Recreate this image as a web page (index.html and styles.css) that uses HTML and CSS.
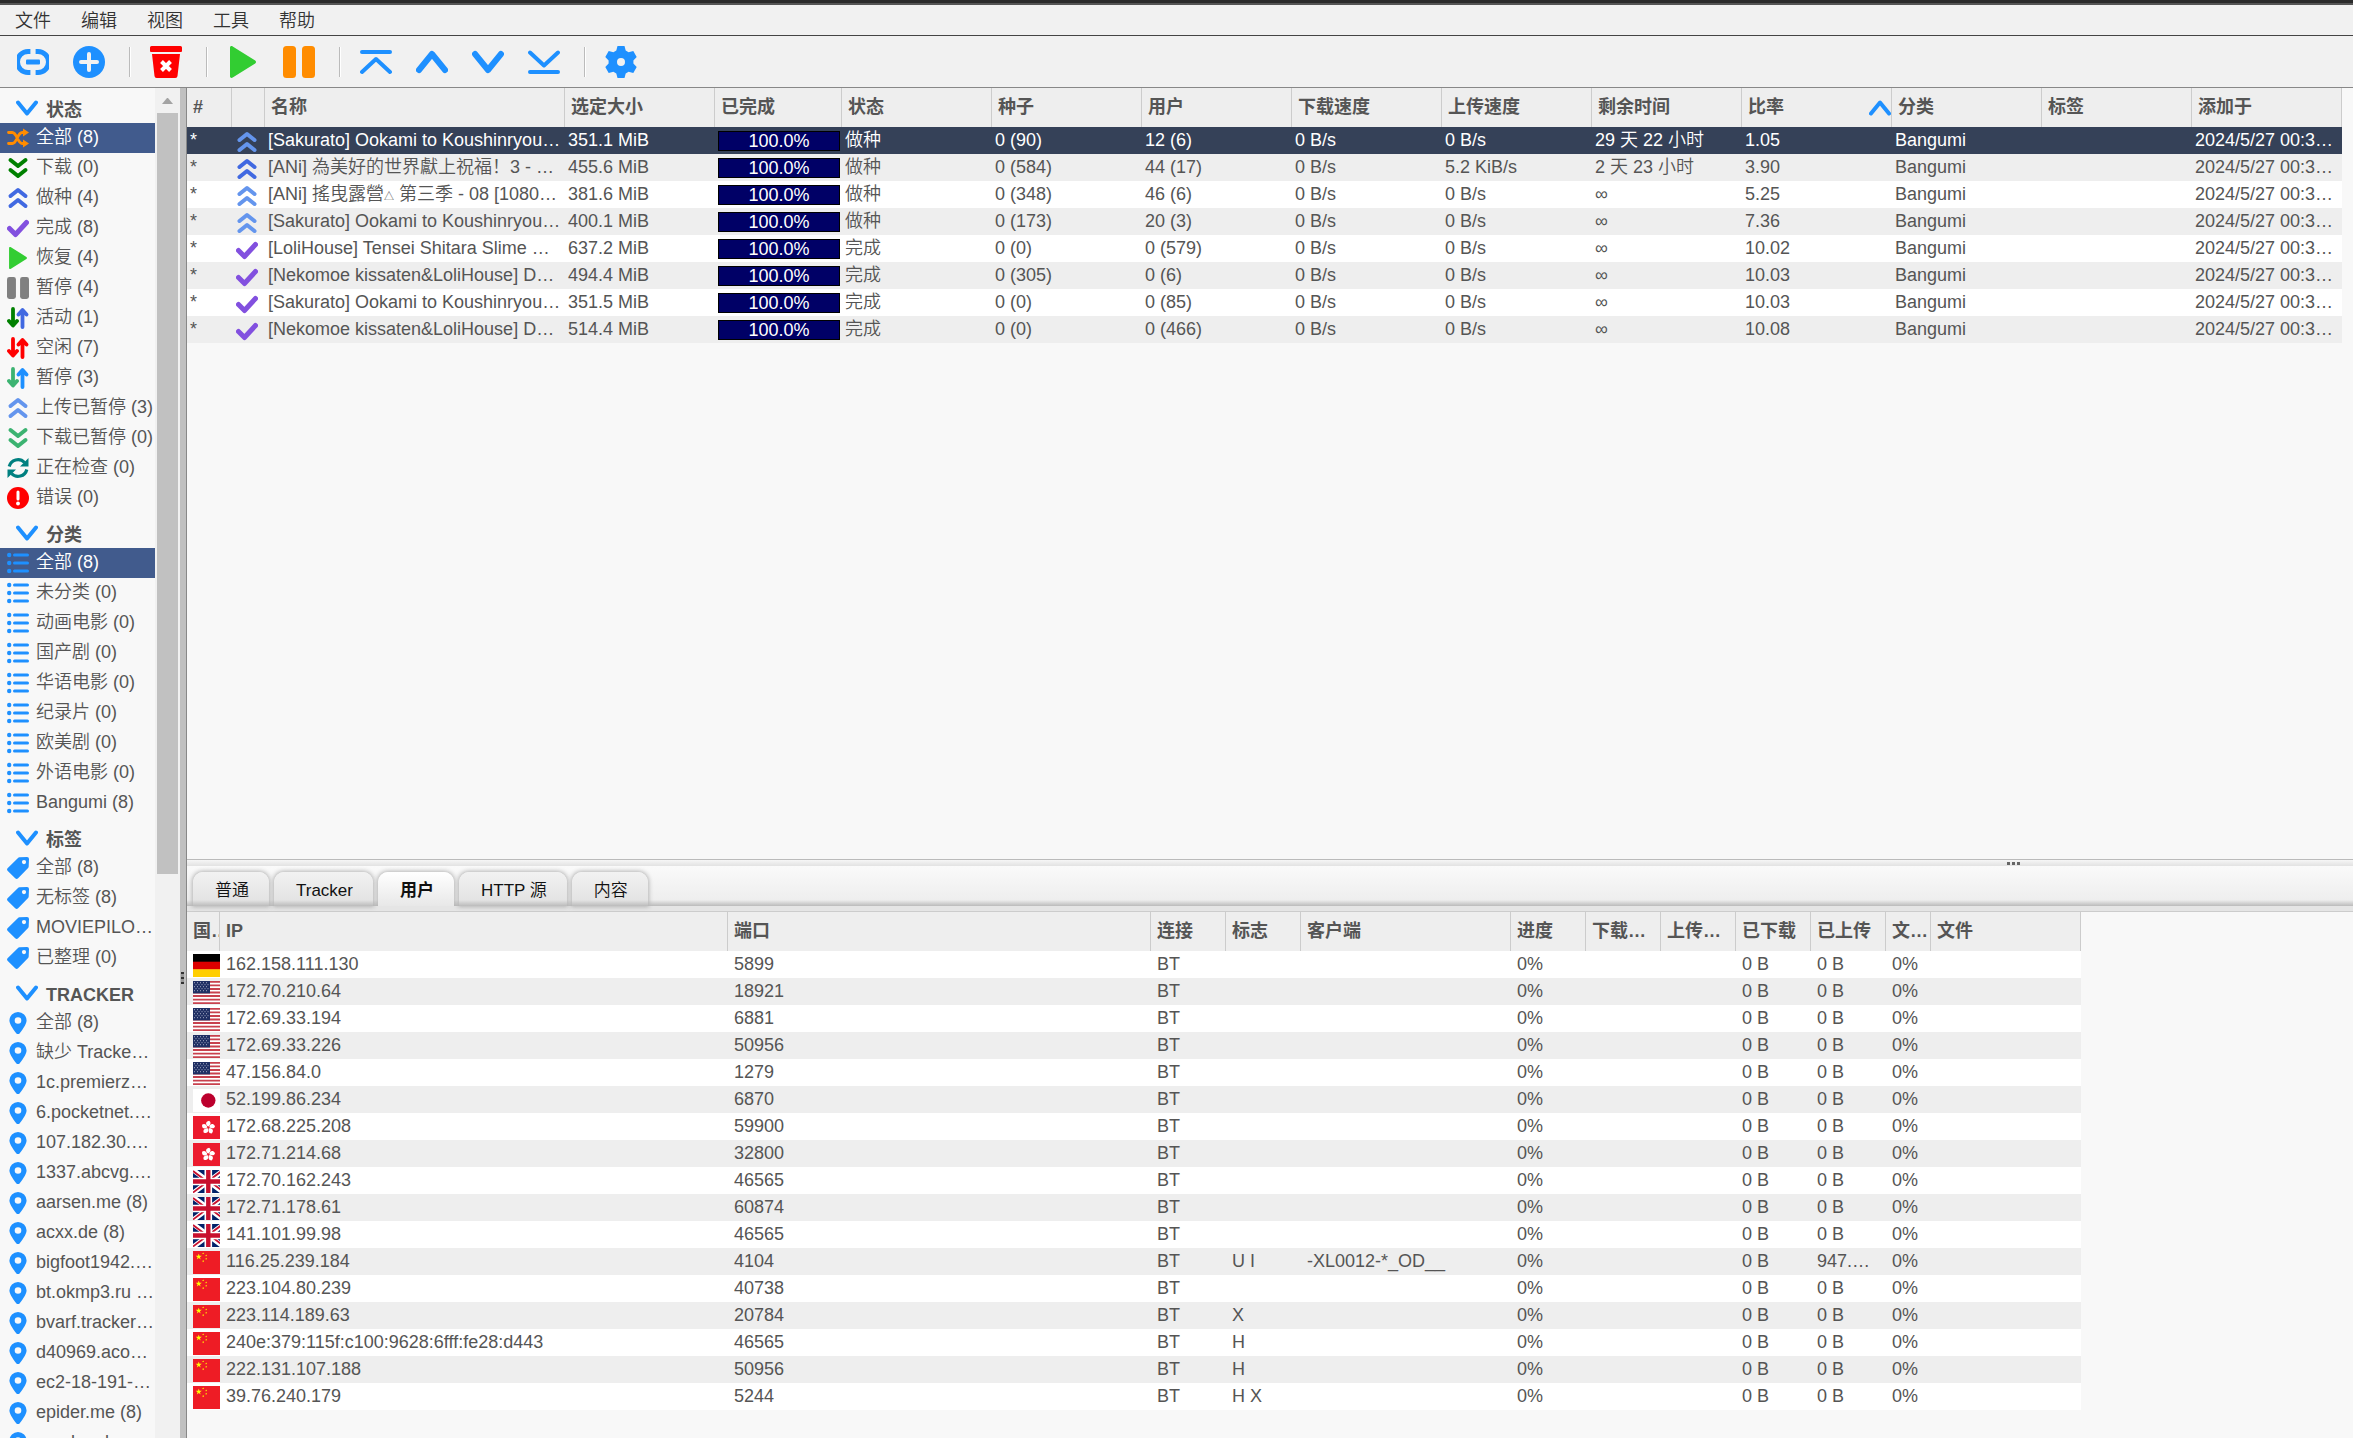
FILE: index.html
```html
<!DOCTYPE html>
<html lang="zh-CN">
<head>
<meta charset="utf-8">
<title>qBittorrent</title>
<meta name="viewport" content="width=device-width, initial-scale=1">
<link rel="stylesheet" href="styles.css">
</head>
<body>
<svg class="sprite" aria-hidden="true">
  <symbol id="link" viewBox="0 0 32 32"><path d="M13.400 5.500H11a10.500 10.500 0 0 0 0 21h2.400M18.600 5.500H21a10.500 10.500 0 0 1 0 21h-2.400" fill="none" stroke="currentColor" stroke-width="5"/><rect x="9" y="13.500" width="14" height="5" rx="1"/></symbol>
  <symbol id="add" viewBox="0 0 32 32"><circle cx="16" cy="16" r="16"/><path d="M16 8v16M8 16h16" stroke="#f1f1f1" stroke-width="4" stroke-linecap="round"/></symbol>
  <symbol id="trash" viewBox="0 0 32 32"><path d="M1.500 0h29a1.500 1.500 0 0 1 1.500 1.500V5a1 1 0 0 1-1 1H1a1 1 0 0 1-1-1V1.500A1.500 1.500 0 0 1 1.500 0zM2 8h28l-2.500 22a2.200 2.200 0 0 1-2.200 2H6.700a2.200 2.200 0 0 1-2.200-2z"/><path d="M11.500 15.500l9 9M20.500 15.500l-9 9" stroke="#fff" stroke-width="4"/></symbol>
  <symbol id="play" viewBox="0 0 32 32"><path d="M3 1.500C3 .2 4.500-.4 5.700.400l22.500 14c1.100.800 1.100 2.400 0 3.200l-22.500 14C4.500 32.400 3 31.800 3 30.500z"/></symbol>
  <symbol id="pause" viewBox="0 0 32 32"><rect width="13" height="32" rx="3.500"/><rect x="19" width="13" height="32" rx="3.500"/></symbol>
  <symbol id="top" viewBox="0 0 32 32"><path d="M2 6h28M2 26l14-13 14 13" fill="none" stroke="currentColor" stroke-width="4" stroke-linecap="round" stroke-linejoin="round"/></symbol>
  <symbol id="bottom" viewBox="0 0 32 32"><path d="M2 26h28M2 6.500l14 13 14-13" fill="none" stroke="currentColor" stroke-width="4" stroke-linecap="round" stroke-linejoin="round"/></symbol>
  <symbol id="up" viewBox="0 0 32 32"><path d="M3 24L16 8l13 16" fill="none" stroke="currentColor" stroke-width="6" stroke-linecap="round" stroke-linejoin="round"/></symbol>
  <symbol id="down" viewBox="0 0 32 32"><path d="M3 8l13 16L29 8" fill="none" stroke="currentColor" stroke-width="6" stroke-linecap="round" stroke-linejoin="round"/></symbol>
  <symbol id="gear" viewBox="0 0 32 32"><path fill-rule="evenodd" d="M12.500 0h7l1.200 4.600 2.900 1.700 4.700-1.300 3.400 6-3.300 3.400v3.200l3.300 3.400-3.400 6-4.700-1.300-2.900 1.700-1.200 4.600h-7l-1.200-4.600-2.900-1.700L3.700 27l-3.400-6 3.300-3.400v-3.200L.3 11l3.400-6 4.700 1.300 2.900-1.700zM16 12a4 4 0 1 0 0 8 4 4 0 0 0 0-8z"/></symbol>
  <symbol id="shuffle" viewBox="0 0 22 22"><path d="M1.500 5.500h3.800c4.700 0 5 11 10 11h3M1.500 16.500h3.800c4.700 0 5-11 10-11h3" fill="none" stroke="currentColor" stroke-width="2.800" stroke-linecap="round"/><path d="M16 1.500l6 4-6 4zM16 12.500l6 4-6 4z"/></symbol>
  <symbol id="dbl-down" viewBox="0 0 22 22"><path d="M3.500 3l7.500 6 7.500-6M3.500 13l7.500 6 7.500-6" fill="none" stroke="currentColor" stroke-width="4" stroke-linecap="round" stroke-linejoin="round"/></symbol>
  <symbol id="dbl-up" viewBox="0 0 22 22"><path d="M3.500 9L11 3l7.500 6M3.500 19l7.500-6 7.500 6" fill="none" stroke="currentColor" stroke-width="4" stroke-linecap="round" stroke-linejoin="round"/></symbol>
  <symbol id="check" viewBox="0 0 22 22"><path d="M2.500 11.500l6 6L19.500 5.500" fill="none" stroke="currentColor" stroke-width="5" stroke-linejoin="round" stroke-linecap="round"/></symbol>
  <symbol id="arrow-down" viewBox="0 0 22 22"><path d="M6 2v16M2 14l4 4.500 4-4.500" fill="none" stroke="currentColor" stroke-width="3.800" stroke-linecap="round" stroke-linejoin="round"/></symbol>
  <symbol id="arrow-up" viewBox="0 0 22 22"><path d="M15.500 20V4M11.500 7.500l4-4.500 4 4.500" fill="none" stroke="currentColor" stroke-width="3.800" stroke-linecap="round" stroke-linejoin="round"/></symbol>
  <symbol id="sync" viewBox="0 0 22 22"><path d="M2.200 9.500A9 9 0 0 1 17.500 5.500M19.800 12.500A9 9 0 0 1 4.500 16.500" fill="none" stroke="currentColor" stroke-width="3.200"/><path d="M21.500 1v8.500H13zM.5 21v-8.500H9z"/></symbol>
  <symbol id="error" viewBox="0 0 22 22"><circle cx="11" cy="11" r="11"/><path d="M11 5v7" stroke="#fff" stroke-width="3" stroke-linecap="round"/><circle cx="11" cy="16.500" r="1.900" fill="#fff"/></symbol>
  <symbol id="list" viewBox="0 0 22 22"><circle cx="2.200" cy="3" r="2.200"/><circle cx="2.200" cy="11" r="2.200"/><circle cx="2.200" cy="19" r="2.200"/><path d="M7.500 3h13M7.500 11h13M7.500 19h13" stroke="currentColor" stroke-width="3" stroke-linecap="round"/></symbol>
  <symbol id="tag" viewBox="0 0 22 22"><path fill-rule="evenodd" d="M12.500.300L20 0a2 2 0 0 1 2 2l-.300 7.500a2 2 0 0 1-.600 1.400l-10 10.300a2 2 0 0 1-2.900 0L.800 14a2 2 0 0 1 0-2.900L11 .900A2 2 0 0 1 12.500.300zM17 3a2.100 2.100 0 1 0 0 4.200A2.100 2.100 0 0 0 17 3z"/></symbol>
  <symbol id="pin" viewBox="0 0 22 22"><path fill-rule="evenodd" d="M11 0a8.600 8.600 0 0 1 8.600 8.600c0 3.900-5.200 10.700-7.600 13.500a1.300 1.300 0 0 1-2 0C7.600 19.300 2.400 12.500 2.400 8.600A8.600 8.600 0 0 1 11 0zm0 5.200a3.300 3.300 0 1 0 0 6.600 3.300 3.300 0 0 0 0-6.600z"/></symbol>
  <symbol id="chevron" viewBox="0 0 22 16"><path d="M2 2.500l9 11 9-11" fill="none" stroke="currentColor" stroke-width="4" stroke-linecap="round" stroke-linejoin="round"/></symbol>
  <symbol id="star" viewBox="-1 -1 2 2"><path d="M0-1L.225-.309H.951L.363.118.588.809 0 .382-.588.809-.363.118-.951-.309H-.225z"/></symbol>
  <symbol id="de" viewBox="0 0 31 23"><path fill="#000" d="M0 0h31v8H0z"/><path fill="#d00" d="M0 7.700h31v8H0z"/><path fill="#ffce00" d="M0 15.300h31V23H0z"/></symbol>
  <symbol id="us" viewBox="0 0 31 23"><path fill="#fff" d="M0 0h31v23H0z"/><path stroke="#c8414e" stroke-width="1.770" d="M0 .9h31M0 4.400h31M0 8h31M0 11.500h31M0 15h31M0 18.600h31M0 22.100h31"/><path fill="#1f2f63" d="M0 0h17v12.400H0z"/><path stroke="#a4abc3" stroke-width="1" stroke-dasharray="1 2" d="M1 1.700h15M2.500 3.700h14M1 5.700h15M2.500 7.700h14M1 9.700h15"/></symbol>
  <symbol id="jp" viewBox="0 0 31 23"><path fill="#fff" d="M0 0h31v23H0z"/><circle cx="15.300" cy="11.500" r="7.200" fill="#bc002d"/></symbol>
  <symbol id="hk" viewBox="0 0 31 23"><path fill="#ec1b2e" d="M0 0h31v23H0z"/><g fill="#fff" transform="translate(15.300 11.500)"><path id="bloom" d="M0-1C-3-2.500-3.200-6 .800-6.800 3.400-5 2-2.500 0-1z"/><use href="#bloom" transform="rotate(72)"/><use href="#bloom" transform="rotate(144)"/><use href="#bloom" transform="rotate(216)"/><use href="#bloom" transform="rotate(288)"/></g></symbol>
  <symbol id="gb" viewBox="0 0 31 23"><path fill="#012169" d="M0 0h31v23H0z"/><path stroke="#fff" stroke-width="5" d="M0 0l31 23M31 0L0 23"/><path stroke="#c8102e" stroke-width="1.800" d="M0 1l14 10.500M31 22L17 11.500M30 0L16 10.500M0 22.500L14 12"/><path stroke="#fff" stroke-width="7.600" d="M15.300 0v23M0 11.500h31"/><path stroke="#c8102e" stroke-width="4.400" d="M15.300 0v23M0 11.500h31"/></symbol>
  <symbol id="cn" viewBox="0 0 31 23"><path fill="#ee1c25" d="M0 0h31v23H0z"/><g fill="#ff0"><use href="#star" x="2.500" y="2.500" width="6.500" height="6.500"/><use href="#star" x="9" y="1.200" width="2.400" height="2.400"/><use href="#star" x="12" y="3.300" width="2.400" height="2.400"/><use href="#star" x="12" y="6.600" width="2.400" height="2.400"/><use href="#star" x="9" y="9" width="2.400" height="2.400"/></g></symbol>
</svg>

<header>
  <nav class="menubar" aria-label="菜单">
    <button type="button">文件</button><button type="button">编辑</button><button type="button">视图</button><button type="button">工具</button><button type="button">帮助</button>
  </nav>
  <div class="toolbar" role="toolbar">
    <button type="button" aria-label="添加链接"><svg class="blue"><use href="#link"/></svg></button>
    <button type="button" aria-label="添加文件"><svg class="blue"><use href="#add"/></svg></button>
    <span class="sep"></span>
    <button type="button" aria-label="删除"><svg class="red"><use href="#trash"/></svg></button>
    <span class="sep"></span>
    <button type="button" aria-label="恢复"><svg class="lime"><use href="#play"/></svg></button>
    <button type="button" aria-label="暂停"><svg class="orange"><use href="#pause"/></svg></button>
    <span class="sep"></span>
    <button type="button" aria-label="移到顶部"><svg class="blue"><use href="#top"/></svg></button>
    <button type="button" aria-label="上移"><svg class="blue"><use href="#up"/></svg></button>
    <button type="button" aria-label="下移"><svg class="blue"><use href="#down"/></svg></button>
    <button type="button" aria-label="移到底部"><svg class="blue"><use href="#bottom"/></svg></button>
    <span class="sep"></span>
    <button type="button" aria-label="选项"><svg class="blue"><use href="#gear"/></svg></button>
  </div>
</header>

<div class="workspace">
  <aside class="sidebar">
    <button type="button" class="group"><svg><use href="#chevron"/></svg>状态</button>
    <ul>
      <li><a href="#" class="selected"><svg class="orange"><use href="#shuffle"/></svg>全部 (8)</a></li>
      <li><a href="#"><svg class="green"><use href="#dbl-down"/></svg>下载 (0)</a></li>
      <li><a href="#"><svg class="royal"><use href="#dbl-up"/></svg>做种 (4)</a></li>
      <li><a href="#"><svg class="purple"><use href="#check"/></svg>完成 (8)</a></li>
      <li><a href="#"><svg class="lime"><use href="#play"/></svg>恢复 (4)</a></li>
      <li><a href="#"><svg class="gray"><use href="#pause"/></svg>暂停 (4)</a></li>
      <li><a href="#"><svg><use href="#arrow-down" class="green"/><use href="#arrow-up" class="royal"/></svg>活动 (1)</a></li>
      <li><a href="#"><svg class="red"><use href="#arrow-down"/><use href="#arrow-up"/></svg>空闲 (7)</a></li>
      <li><a href="#"><svg><use href="#arrow-down" class="sea"/><use href="#arrow-up" class="blue"/></svg>暂停 (3)</a></li>
      <li><a href="#"><svg class="corn"><use href="#dbl-up"/></svg>上传已暂停 (3)</a></li>
      <li><a href="#"><svg class="sea"><use href="#dbl-down"/></svg>下载已暂停 (0)</a></li>
      <li><a href="#"><svg class="teal"><use href="#sync"/></svg>正在检查 (0)</a></li>
      <li><a href="#"><svg class="red"><use href="#error"/></svg>错误 (0)</a></li>
    </ul>
    <button type="button" class="group"><svg><use href="#chevron"/></svg>分类</button>
    <ul>
      <li><a href="#" class="selected"><svg><use href="#list"/></svg>全部 (8)</a></li>
      <li><a href="#"><svg><use href="#list"/></svg>未分类 (0)</a></li>
      <li><a href="#"><svg><use href="#list"/></svg>动画电影 (0)</a></li>
      <li><a href="#"><svg><use href="#list"/></svg>国产剧 (0)</a></li>
      <li><a href="#"><svg><use href="#list"/></svg>华语电影 (0)</a></li>
      <li><a href="#"><svg><use href="#list"/></svg>纪录片 (0)</a></li>
      <li><a href="#"><svg><use href="#list"/></svg>欧美剧 (0)</a></li>
      <li><a href="#"><svg><use href="#list"/></svg>外语电影 (0)</a></li>
      <li><a href="#"><svg><use href="#list"/></svg>Bangumi (8)</a></li>
    </ul>
    <button type="button" class="group"><svg><use href="#chevron"/></svg>标签</button>
    <ul>
      <li><a href="#"><svg><use href="#tag"/></svg>全部 (8)</a></li>
      <li><a href="#"><svg><use href="#tag"/></svg>无标签 (8)</a></li>
      <li><a href="#"><svg><use href="#tag"/></svg>MOVIEPILO…</a></li>
      <li><a href="#"><svg><use href="#tag"/></svg>已整理 (0)</a></li>
    </ul>
    <button type="button" class="group"><svg><use href="#chevron"/></svg>TRACKER</button>
    <ul>
      <li><a href="#"><svg><use href="#pin"/></svg>全部 (8)</a></li>
      <li><a href="#"><svg><use href="#pin"/></svg>缺少 Tracke…</a></li>
      <li><a href="#"><svg><use href="#pin"/></svg>1c.premierz…</a></li>
      <li><a href="#"><svg><use href="#pin"/></svg>6.pocketnet.…</a></li>
      <li><a href="#"><svg><use href="#pin"/></svg>107.182.30.…</a></li>
      <li><a href="#"><svg><use href="#pin"/></svg>1337.abcvg.…</a></li>
      <li><a href="#"><svg><use href="#pin"/></svg>aarsen.me (8)</a></li>
      <li><a href="#"><svg><use href="#pin"/></svg>acxx.de (8)</a></li>
      <li><a href="#"><svg><use href="#pin"/></svg>bigfoot1942.…</a></li>
      <li><a href="#"><svg><use href="#pin"/></svg>bt.okmp3.ru …</a></li>
      <li><a href="#"><svg><use href="#pin"/></svg>bvarf.tracker…</a></li>
      <li><a href="#"><svg><use href="#pin"/></svg>d40969.aco…</a></li>
      <li><a href="#"><svg><use href="#pin"/></svg>ec2-18-191-…</a></li>
      <li><a href="#"><svg><use href="#pin"/></svg>epider.me (8)</a></li>
      <li><a href="#"><svg><use href="#pin"/></svg>exodus.des…</a></li>
    </ul>
  </aside>
  <div class="scrollbar" aria-hidden="true"><span class="scroll-arrow"></span><span class="scroll-thumb"></span></div>
  <div class="splitter-v"><span class="grip"></span></div>

  <main>
    <section class="transfers">
      <table>
        <colgroup><col class="w45"><col class="w33"><col class="w300"><col class="w150"><col class="w127"><col class="w150"><col class="w150"><col class="w150"><col class="w150"><col class="w150"><col class="w150"><col class="w150"><col class="w150"><col class="w150"></colgroup>
        <thead><tr><th>#</th><th></th><th>名称</th><th>选定大小</th><th>已完成</th><th>状态</th><th>种子</th><th>用户</th><th>下载速度</th><th>上传速度</th><th>剩余时间</th><th><span class="sorted">比率<svg><use href="#chevron"/></svg></span></th><th>分类</th><th>标签</th><th>添加于</th></tr></thead>
        <tbody>
          <tr class="selected"><td>*</td><td class="state corn"><svg><use href="#dbl-up"/></svg></td><td>[Sakurato] Ookami to Koushinryou…</td><td>351.1 MiB</td><td class="done"><div class="bar">100.0%</div></td><td>做种</td><td>0 (90)</td><td>12 (6)</td><td>0 B/s</td><td>0 B/s</td><td>29 天 22 小时</td><td>1.05</td><td>Bangumi</td><td></td><td>2024/5/27 00:3…</td></tr>
          <tr><td>*</td><td class="state royal"><svg><use href="#dbl-up"/></svg></td><td>[ANi] 為美好的世界獻上祝福！3 - …</td><td>455.6 MiB</td><td class="done"><div class="bar">100.0%</div></td><td>做种</td><td>0 (584)</td><td>44 (17)</td><td>0 B/s</td><td>5.2 KiB/s</td><td>2 天 23 小时</td><td>3.90</td><td>Bangumi</td><td></td><td>2024/5/27 00:3…</td></tr>
          <tr><td>*</td><td class="state corn"><svg><use href="#dbl-up"/></svg></td><td>[ANi] 搖曳露營<span class="tri">△</span> 第三季 - 08 [1080…</td><td>381.6 MiB</td><td class="done"><div class="bar">100.0%</div></td><td>做种</td><td>0 (348)</td><td>46 (6)</td><td>0 B/s</td><td>0 B/s</td><td>∞</td><td>5.25</td><td>Bangumi</td><td></td><td>2024/5/27 00:3…</td></tr>
          <tr><td>*</td><td class="state corn"><svg><use href="#dbl-up"/></svg></td><td>[Sakurato] Ookami to Koushinryou…</td><td>400.1 MiB</td><td class="done"><div class="bar">100.0%</div></td><td>做种</td><td>0 (173)</td><td>20 (3)</td><td>0 B/s</td><td>0 B/s</td><td>∞</td><td>7.36</td><td>Bangumi</td><td></td><td>2024/5/27 00:3…</td></tr>
          <tr><td>*</td><td class="state purple"><svg><use href="#check"/></svg></td><td>[LoliHouse] Tensei Shitara Slime …</td><td>637.2 MiB</td><td class="done"><div class="bar">100.0%</div></td><td>完成</td><td>0 (0)</td><td>0 (579)</td><td>0 B/s</td><td>0 B/s</td><td>∞</td><td>10.02</td><td>Bangumi</td><td></td><td>2024/5/27 00:3…</td></tr>
          <tr><td>*</td><td class="state purple"><svg><use href="#check"/></svg></td><td>[Nekomoe kissaten&amp;LoliHouse] D…</td><td>494.4 MiB</td><td class="done"><div class="bar">100.0%</div></td><td>完成</td><td>0 (305)</td><td>0 (6)</td><td>0 B/s</td><td>0 B/s</td><td>∞</td><td>10.03</td><td>Bangumi</td><td></td><td>2024/5/27 00:3…</td></tr>
          <tr><td>*</td><td class="state purple"><svg><use href="#check"/></svg></td><td>[Sakurato] Ookami to Koushinryou…</td><td>351.5 MiB</td><td class="done"><div class="bar">100.0%</div></td><td>完成</td><td>0 (0)</td><td>0 (85)</td><td>0 B/s</td><td>0 B/s</td><td>∞</td><td>10.03</td><td>Bangumi</td><td></td><td>2024/5/27 00:3…</td></tr>
          <tr><td>*</td><td class="state purple"><svg><use href="#check"/></svg></td><td>[Nekomoe kissaten&amp;LoliHouse] D…</td><td>514.4 MiB</td><td class="done"><div class="bar">100.0%</div></td><td>完成</td><td>0 (0)</td><td>0 (466)</td><td>0 B/s</td><td>0 B/s</td><td>∞</td><td>10.08</td><td>Bangumi</td><td></td><td>2024/5/27 00:3…</td></tr>
        </tbody>
      </table>
    </section>

    <section class="details">
      <div class="splitter-h"><span class="grip"></span></div>
      <div class="tabs" role="tablist">
        <button type="button" role="tab">普通</button>
        <button type="button" role="tab">Tracker</button>
        <button type="button" role="tab" aria-selected="true" class="active">用户</button>
        <button type="button" role="tab">HTTP 源</button>
        <button type="button" role="tab">内容</button>
      </div>
      <div class="peers">
        <table>
          <colgroup><col class="w33"><col class="w508"><col class="w423"><col class="w75"><col class="w75"><col class="w210"><col class="w75"><col class="w75"><col class="w75"><col class="w75"><col class="w75"><col class="w45"><col class="w150"></colgroup>
          <thead><tr><th>国…</th><th>IP</th><th>端口</th><th>连接</th><th>标志</th><th>客户端</th><th>进度</th><th>下载…</th><th>上传…</th><th>已下载</th><th>已上传</th><th>文…</th><th>文件</th></tr></thead>
          <tbody>
            <tr><td class="flag"><svg><use href="#de"/></svg></td><td>162.158.111.130</td><td>5899</td><td>BT</td><td></td><td></td><td>0%</td><td></td><td></td><td>0 B</td><td>0 B</td><td>0%</td><td></td></tr>
            <tr><td class="flag"><svg><use href="#us"/></svg></td><td>172.70.210.64</td><td>18921</td><td>BT</td><td></td><td></td><td>0%</td><td></td><td></td><td>0 B</td><td>0 B</td><td>0%</td><td></td></tr>
            <tr><td class="flag"><svg><use href="#us"/></svg></td><td>172.69.33.194</td><td>6881</td><td>BT</td><td></td><td></td><td>0%</td><td></td><td></td><td>0 B</td><td>0 B</td><td>0%</td><td></td></tr>
            <tr><td class="flag"><svg><use href="#us"/></svg></td><td>172.69.33.226</td><td>50956</td><td>BT</td><td></td><td></td><td>0%</td><td></td><td></td><td>0 B</td><td>0 B</td><td>0%</td><td></td></tr>
            <tr><td class="flag"><svg><use href="#us"/></svg></td><td>47.156.84.0</td><td>1279</td><td>BT</td><td></td><td></td><td>0%</td><td></td><td></td><td>0 B</td><td>0 B</td><td>0%</td><td></td></tr>
            <tr><td class="flag"><svg><use href="#jp"/></svg></td><td>52.199.86.234</td><td>6870</td><td>BT</td><td></td><td></td><td>0%</td><td></td><td></td><td>0 B</td><td>0 B</td><td>0%</td><td></td></tr>
            <tr><td class="flag"><svg><use href="#hk"/></svg></td><td>172.68.225.208</td><td>59900</td><td>BT</td><td></td><td></td><td>0%</td><td></td><td></td><td>0 B</td><td>0 B</td><td>0%</td><td></td></tr>
            <tr><td class="flag"><svg><use href="#hk"/></svg></td><td>172.71.214.68</td><td>32800</td><td>BT</td><td></td><td></td><td>0%</td><td></td><td></td><td>0 B</td><td>0 B</td><td>0%</td><td></td></tr>
            <tr><td class="flag"><svg><use href="#gb"/></svg></td><td>172.70.162.243</td><td>46565</td><td>BT</td><td></td><td></td><td>0%</td><td></td><td></td><td>0 B</td><td>0 B</td><td>0%</td><td></td></tr>
            <tr><td class="flag"><svg><use href="#gb"/></svg></td><td>172.71.178.61</td><td>60874</td><td>BT</td><td></td><td></td><td>0%</td><td></td><td></td><td>0 B</td><td>0 B</td><td>0%</td><td></td></tr>
            <tr><td class="flag"><svg><use href="#gb"/></svg></td><td>141.101.99.98</td><td>46565</td><td>BT</td><td></td><td></td><td>0%</td><td></td><td></td><td>0 B</td><td>0 B</td><td>0%</td><td></td></tr>
            <tr><td class="flag"><svg><use href="#cn"/></svg></td><td>116.25.239.184</td><td>4104</td><td>BT</td><td>U I</td><td>-XL0012-*_OD__</td><td>0%</td><td></td><td></td><td>0 B</td><td>947.…</td><td>0%</td><td></td></tr>
            <tr><td class="flag"><svg><use href="#cn"/></svg></td><td>223.104.80.239</td><td>40738</td><td>BT</td><td></td><td></td><td>0%</td><td></td><td></td><td>0 B</td><td>0 B</td><td>0%</td><td></td></tr>
            <tr><td class="flag"><svg><use href="#cn"/></svg></td><td>223.114.189.63</td><td>20784</td><td>BT</td><td>X</td><td></td><td>0%</td><td></td><td></td><td>0 B</td><td>0 B</td><td>0%</td><td></td></tr>
            <tr><td class="flag"><svg><use href="#cn"/></svg></td><td>240e:379:115f:c100:9628:6fff:fe28:d443</td><td>46565</td><td>BT</td><td>H</td><td></td><td>0%</td><td></td><td></td><td>0 B</td><td>0 B</td><td>0%</td><td></td></tr>
            <tr><td class="flag"><svg><use href="#cn"/></svg></td><td>222.131.107.188</td><td>50956</td><td>BT</td><td>H</td><td></td><td>0%</td><td></td><td></td><td>0 B</td><td>0 B</td><td>0%</td><td></td></tr>
            <tr><td class="flag"><svg><use href="#cn"/></svg></td><td>39.76.240.179</td><td>5244</td><td>BT</td><td>H X</td><td></td><td>0%</td><td></td><td></td><td>0 B</td><td>0 B</td><td>0%</td><td></td></tr>
          </tbody>
        </table>
      </div>
    </section>
  </main>
</div>
</body>
</html>
```
FILE: styles.css
```css
* { box-sizing: border-box; }

body {
  margin: 0;
  height: 100vh;
  display: flex;
  flex-direction: column;
  overflow: hidden;
  background: #f8f8f8;
  color: #555;
  font: 350 18px/27px "Liberation Sans", "Noto Sans CJK SC", sans-serif;
}

button {
  margin: 0;
  padding: 0;
  border: 0;
  background: none;
  color: inherit;
  font: inherit;
}

svg { display: block; fill: currentColor; overflow: visible; }
.sprite { display: none; }

.blue { color: #1e90ff; }
.red { color: #f00; }
.lime { color: #32cd32; }
.orange { color: #ff8c00; }
.green { color: #008000; }
.royal { color: #4169e1; }
.purple { color: #8250df; }
.gray { color: #808080; }
.sea { color: #3cb371; }
.corn { color: #6495ed; }
.teal { color: #008080; }

/* Header */
header {
  flex: none;
  border-top: 3px solid #2b2b2b;
  background: #f1f1f1;
}

.menubar {
  display: flex;
  gap: 30px;
  height: 33px;
  padding: 0 15px;
  border-top: 2px solid #555;
  border-bottom: 1px solid #444;
  color: #333;
  line-height: 30px;
}

.menubar button { padding-top: 1px; }

.toolbar {
  display: flex;
  align-items: center;
  height: 52px;
  padding-left: 5px;
  border-bottom: 1px solid #888;
}

.toolbar button { padding: 0 12px; }
.toolbar svg { width: 32px; height: 32px; }

.sep {
  width: 2px;
  height: 30px;
  margin: 0 7px 0 12px;
  border-left: 1px solid #bbb;
  background: #fff;
}

/* Filters */
.workspace { flex: 1; display: flex; min-height: 0; }

.sidebar { flex: none; width: 155px; overflow: hidden; }

.sidebar ul { margin: 0; padding: 0; list-style: none; }

.group {
  display: flex;
  gap: 8px;
  width: 100%;
  height: 35px;
  padding: 9px 0 0 16px;
  font-weight: bold;
  line-height: 27px;
}

.group svg { width: 22px; height: 16px; margin-top: 3px; color: #1e90ff; }

.sidebar a {
  display: flex;
  gap: 7px;
  height: 30px;
  padding-left: 7px;
  color: inherit;
  line-height: 28px;
  text-decoration: none;
  white-space: nowrap;
}

.sidebar a.selected { background: #415b8d; color: #fff; }
.sidebar a svg { flex: none; width: 22px; height: 22px; margin-top: 4px; }
.sidebar a svg:not([class]) { color: #1e90ff; }

.scrollbar { flex: none; width: 25px; padding: 10px 2px 0; background: #f1f1f1; }

.scroll-arrow {
  display: block;
  margin: 0 5px 9px;
  border: 5px solid transparent;
  border-top: 0;
  border-bottom: 6px solid #a3a3a3;
}

.scroll-thumb { display: block; height: 761px; background: #c1c1c1; }

.splitter-v {
  flex: none;
  display: flex;
  align-items: center;
  width: 7px;
  padding-left: 1px;
  border-right: 1px solid #888;
  background: #c0c0c0;
}

.splitter-v .grip {
  width: 3px;
  height: 12px;
  margin-top: 430px;
  background: repeating-linear-gradient(#333 0 2px, #999 2px 5px);
}

/* Tables */
main { flex: 1; display: flex; flex-direction: column; min-width: 0; }
.transfers { flex: 1; min-height: 0; overflow: hidden; }

table { border-spacing: 0; table-layout: fixed; }

.w33 { width: 33px; }
.w45 { width: 45px; }
.w75 { width: 75px; }
.w127 { width: 127px; }
.w150 { width: 150px; }
.w210 { width: 210px; }
.w300 { width: 300px; }
.w423 { width: 423px; }
.w508 { width: 508px; }

.transfers table { width: 2155px; }
.peers table { width: 1894px; }

th {
  height: 39px;
  padding: 0 0 0 6px;
  border-right: 1px solid #ccc;
  background: #eee;
  overflow: hidden;
  text-align: left;
  white-space: nowrap;
}

td {
  height: 27px;
  padding: 0 0 0 3px;
  overflow: hidden;
  vertical-align: top;
  white-space: nowrap;
}

.peers td { padding-left: 6px; }
tbody tr { background: #fff; }
tbody tr:nth-child(even) { background: #eee; }
tbody tr.selected { background: #354158; color: #fff; }

.transfers .state { padding: 4px 0 0 4px; }
.state svg { width: 22px; height: 22px; }

.transfers .done { padding: 4px 2px 0 3px; }

.bar {
  height: 20px;
  border: 1px solid #000;
  background: #006;
  color: #fff;
  line-height: 19px;
  text-align: center;
}

.sorted { display: flex; align-items: center; justify-content: space-between; }
.sorted svg { width: 22px; height: 16px; color: #1e90ff; transform: rotate(180deg); }

.tri { font-size: 10px; line-height: 1; }

/* Details */
.details { flex: none; padding-bottom: 28px; }

.splitter-h {
  height: 7px;
  padding: 2px 0 0 1820px;
  border-top: 1px solid #bbb;
  background: linear-gradient(#f6f6f6, #e2e2e2);
}

.splitter-h .grip {
  display: block;
  width: 13px;
  height: 3px;
  background: repeating-linear-gradient(90deg, #666 0 3px, transparent 3px 5px);
}

.tabs {
  display: flex;
  align-items: flex-end;
  gap: 5px;
  height: 46px;
  padding: 0 0 5px 6px;
  border-bottom: 1px solid #ccc;
  background:
    linear-gradient(#e5e5e5, #e5e5e5) bottom / 100% 5px no-repeat,
    linear-gradient(#fafafa, #eee 34px, #bbb 40px);
  color: #111;
  font-size: 17px;
}

.tabs button {
  height: 34px;
  padding: 3px 20px 0 22px;
  border-radius: 10px 10px 0 0;
  background: linear-gradient(#f2f2f2, #e4e4e4 28px, #bbb 34px);
  box-shadow: 0 0 4px 1px #b4b4b4;
  line-height: 31px;
}

.tabs button.active {
  background: linear-gradient(#fff, #e8e8e8);
  font-weight: bold;
  clip-path: inset(-5px -5px 0 -5px);
}

.peers { overflow: hidden; }
.peers .flag { padding: 3px 0 0 6px; }
.flag svg { width: 31px; height: 23px; }
```
